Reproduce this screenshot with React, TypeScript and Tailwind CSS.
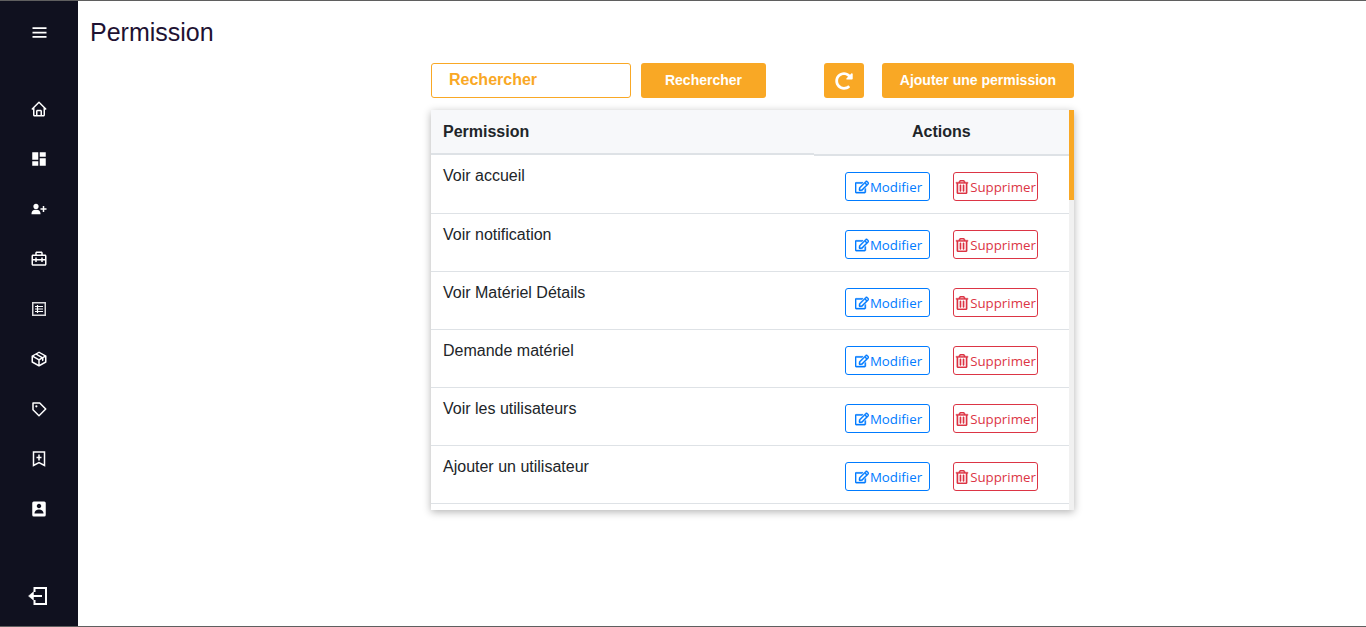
import { BiMenu, BiHome, BiSolidUserPlus, BiBriefcaseAlt2, BiPackage, BiPurchaseTag, BiSolidUserRectangle } from "react-icons/bi";
import { MdDashboard } from "react-icons/md";
import { FaRedoAlt, FaRegEdit, FaRegTrashAlt } from "react-icons/fa";

function SheetIcon() {
  return (
    <svg width="14" height="14" viewBox="0 0 14 14" fill="none" stroke="white">
      <rect x="0.75" y="0.75" width="12.5" height="12.5" strokeWidth="1.5" opacity="0.85" />
      <path d="M3 4.5h8M3 7h8M3 9.5h8M5.5 3v8" strokeWidth="1.2" />
    </svg>
  );
}

function BookmarkIcon() {
  return (
    <svg width="14" height="16" viewBox="0 0 14 16" fill="none" stroke="white" strokeWidth="1.5">
      <path d="M1.5 1h11v13.5L7 11.5l-5.5 3z" />
      <path d="M7 3.5v6M4.5 6.5h5" />
    </svg>
  );
}

function LogoutIcon() {
  return (
    <svg width="19" height="18" viewBox="0 0 19 18" fill="none" stroke="white" strokeWidth="2">
      <path d="M6.5 5V1h11.5v16H6.5v-4" />
      <path d="M14 9H3" />
      <path d="M0.5 9 5.5 4.8v8.4z" fill="white" strokeWidth="0.5" />
    </svg>
  );
}

const navIcons = [
  <BiHome className="text-[18px]" />,
  <MdDashboard className="text-[18px]" />,
  <BiSolidUserPlus className="text-[18px]" />,
  <BiBriefcaseAlt2 className="text-[18px]" />,
  <SheetIcon />,
  <BiPackage className="text-[18px]" />,
  <BiPurchaseTag className="text-[18px]" />,
  <BookmarkIcon />,
  <BiSolidUserRectangle className="text-[18px]" />,
];

const permissions = [
  "Voir accueil",
  "Voir notification",
  "Voir Matériel Détails",
  "Demande matériel",
  "Voir les utilisateurs",
  "Ajouter un utilisateur",
];

function Row({ name, first }: { name: string; first: boolean }) {
  return (
    <div className={first ? "flex h-[59px] shrink-0 border-b border-[#dee2e6]" : "flex h-[58px] shrink-0 border-b border-[#dee2e6]"}>
      <div className="w-[383px] px-3 pt-[9px] text-base leading-6 text-[#212529]">{name}</div>
      <div className={first ? "flex flex-1 items-start pt-[17px] pl-[31px] font-['Open_Sans',sans-serif] text-[13.3px]" : "flex flex-1 items-start pt-[16px] pl-[31px] font-['Open_Sans',sans-serif] text-[13.3px]"}>
        <button className="flex h-[29px] w-[85px] items-center justify-center gap-px rounded-[3px] border border-[#007bff] pt-[2px] pl-[2px] text-[#007bff]">
          <FaRegEdit className="-mt-[2px] stroke-[16px] text-[14px]" />
          Modifier
        </button>
        <button className="ml-[23px] flex h-[29px] w-[85px] items-center justify-center gap-px rounded-[3px] border border-[#dc3545] pt-[2px] text-[#dc3545]">
          <FaRegTrashAlt className="-mt-[2px] shrink-0 stroke-[12px] text-[14px]" />
          Supprimer
        </button>
      </div>
    </div>
  );
}

export default function App() {
  return (
    <div className="relative flex h-[627px] overflow-hidden border-y border-[#5f5f5f] font-['Liberation_Sans',Arial,sans-serif]">
      {/* sidebar */}
      <div className="flex w-[78px] shrink-0 flex-col items-center bg-[#10111f] text-white">
        <div className="mt-[21px] flex h-5 items-center justify-center">
          <BiMenu className="text-[21px]" />
        </div>
        <div className="mt-[57px] flex flex-col items-center gap-[30px]">
          {navIcons.map((icon, i) => (
            <div key={i} className="flex h-5 w-5 items-center justify-center">
              {icon}
            </div>
          ))}
        </div>
        <div className="mt-auto mb-[20px] flex h-5 items-center justify-center">
          <div className="-ml-[3px]">
            <LogoutIcon />
          </div>
        </div>
      </div>

      {/* main */}
      <div className="flex-1 bg-white">
        <h1 className="mt-[15px] ml-3 text-[25px] leading-8 text-[#1e1232]">Permission</h1>

        <div className="mt-[15px] ml-[353px] w-[643px]">
          <div className="flex h-[35px] items-stretch">
            <input
              placeholder="Rechercher"
              className="w-[200px] rounded-[3px] border border-[#f9a825] pl-[17px] pb-[1px] text-base font-bold outline-none placeholder:text-[#f9a825]"
            />
            <button className="ml-[10px] w-[125px] rounded-[3px] bg-[#f9a825] pb-[2px] text-sm font-bold text-white">Rechercher</button>
            <button className="ml-[58px] flex w-10 items-center justify-center rounded-[3px] bg-[#f9a825] text-white">
              <FaRedoAlt className="text-[18px]" />
            </button>
            <button className="ml-[18px] w-[192px] rounded-[3px] bg-[#f9a825] pb-[2px] text-sm font-bold text-white">Ajouter une permission</button>
          </div>

          <div className="mt-3 flex h-[400px] shadow-[0_2px_8px_rgba(0,0,0,0.3)]">
            <div className="flex min-w-0 flex-1 flex-col overflow-hidden">
              <div className="flex h-[45px] shrink-0 bg-[#f7f8fa] text-base font-bold text-[#212529]">
                <div className="w-[383px] border-b-2 border-[#dee2e6] px-3 pt-[10px] leading-6">Permission</div>
                <div className="mb-[-1px] flex-1 border-b-2 border-[#dee2e6] pt-[10px] pl-[98px] leading-6">Actions</div>
              </div>
              {permissions.map((name, i) => (
                <Row key={name} name={name} first={i === 0} />
              ))}
            </div>
            {/* scrollbar */}
            <div className="w-[5px] shrink-0 bg-[#f1f1f1]">
              <div className="h-[90px] bg-[#f9a825]" />
            </div>
          </div>
        </div>
      </div>

      <div className="absolute bottom-[-1px] left-0 h-px w-[48px] bg-[#10111f]" />
    </div>
  );
}
